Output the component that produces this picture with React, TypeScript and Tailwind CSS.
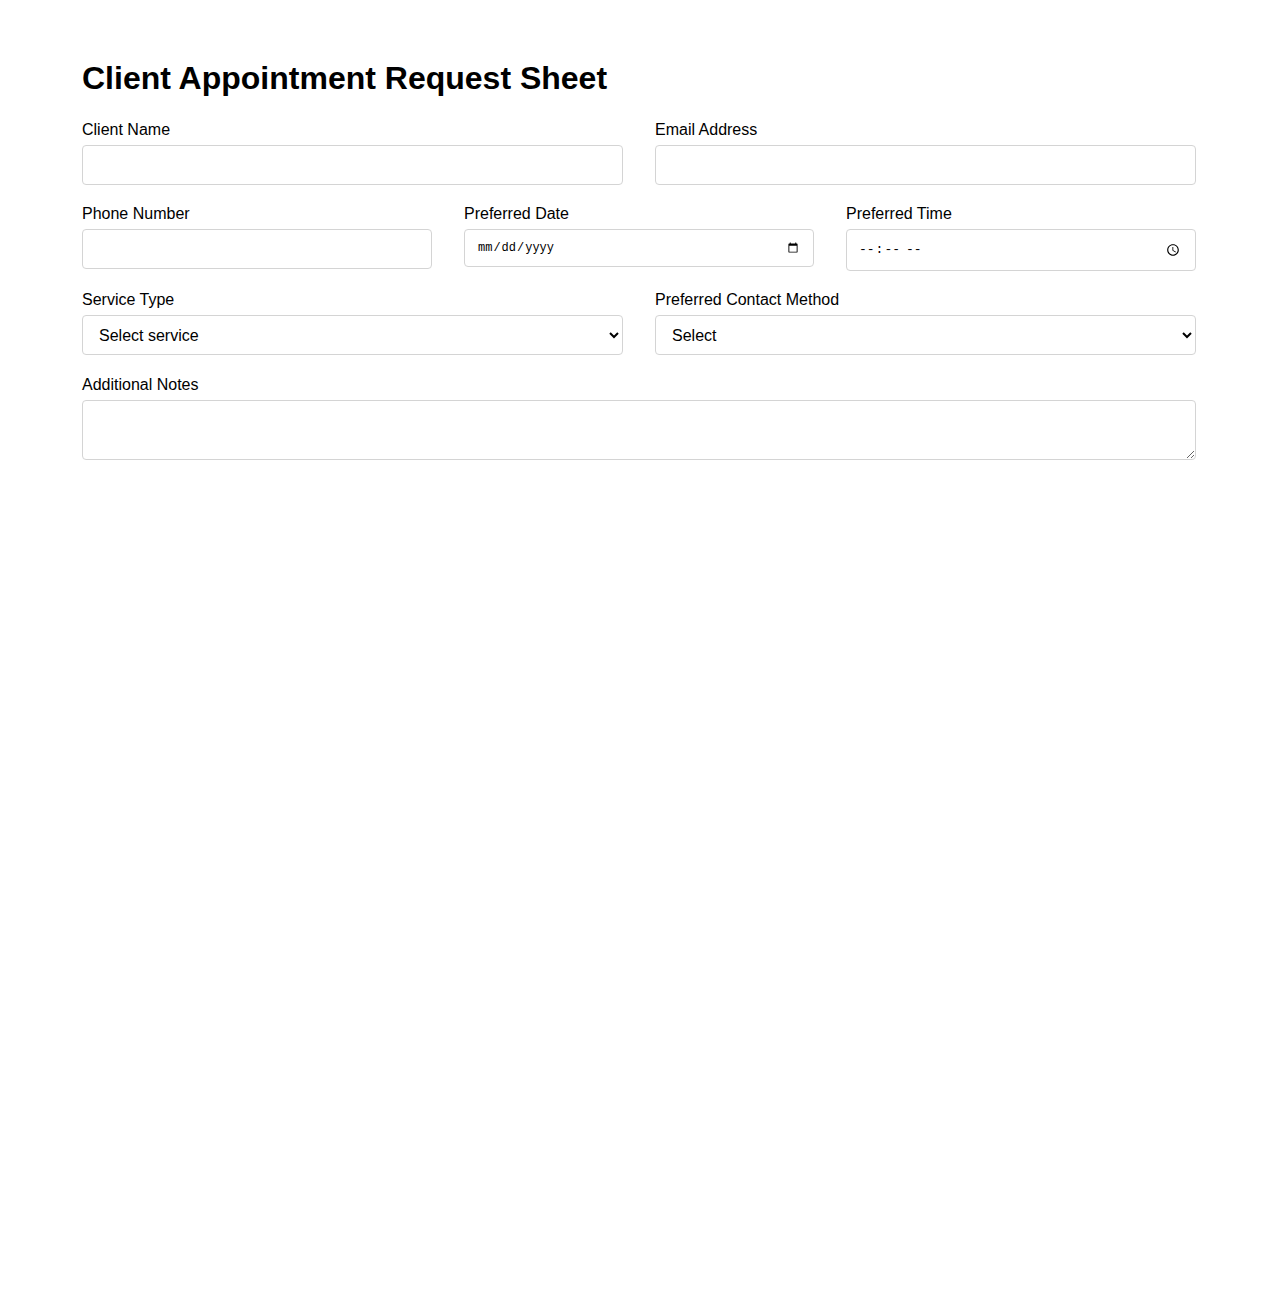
import React from "react";

const inputCls =
  "w-full h-10 border border-[#d4d4d4] rounded-[4px] px-3 bg-white text-[16px] outline-none";
const labelCls = "block text-[16px] leading-[18px] mb-[6px]";

export default function App() {
  return (
    <div className="min-h-[1300px] bg-white text-black" style={{ fontFamily: '"Liberation Sans", Arial, sans-serif' }}>
      <div className="px-[82px] pt-[58px]">
        <h1 className="text-[32px] font-bold leading-[40px] mb-[23px]">Client Appointment Request Sheet</h1>
        <div className="grid grid-cols-2 gap-x-8">
          <div>
            <label className={labelCls}>Client Name</label>
            <input type="text" className={inputCls} />
          </div>
          <div>
            <label className={labelCls}>Email Address</label>
            <input type="email" className={inputCls} />
          </div>
        </div>
        <div className="grid grid-cols-3 gap-x-8 mt-[20px]">
          <div>
            <label className={labelCls}>Phone Number</label>
            <input type="tel" className={inputCls} />
          </div>
          <div>
            <label className={labelCls}>Preferred Date</label>
            <input type="date" className="w-full h-[38px] border border-[#d4d4d4] rounded-[4px] pl-[12px] pr-3 bg-white text-[12px] font-mono outline-none" />
          </div>
          <div>
            <label className={labelCls}>Preferred Time</label>
            <input type="time" className="w-full h-[42px] border border-[#d4d4d4] rounded-[4px] pl-[11px] pr-3 bg-white text-[13px] font-mono outline-none" />
          </div>
        </div>
        <div className="grid grid-cols-2 gap-x-8 mt-[20px]">
          <div>
            <label className={labelCls}>Service Type</label>
            <select className="w-full h-10 border border-[#d4d4d4] rounded-[4px] px-3 bg-white text-[16px] appearance-auto outline-none">
              <option>Select service</option>
            </select>
          </div>
          <div>
            <label className={labelCls}>Preferred Contact Method</label>
            <select className="w-full h-10 border border-[#d4d4d4] rounded-[4px] px-3 bg-white text-[16px] appearance-auto outline-none">
              <option>Select</option>
            </select>
          </div>
        </div>
        <div className="mt-[21px]">
          <label className={labelCls}>Additional Notes</label>
          <textarea className="block w-full h-[60px] border border-[#d4d4d4] rounded-[4px] px-3 py-2 bg-white text-[16px] outline-none" />
        </div>
      </div>
    </div>
  );
}
